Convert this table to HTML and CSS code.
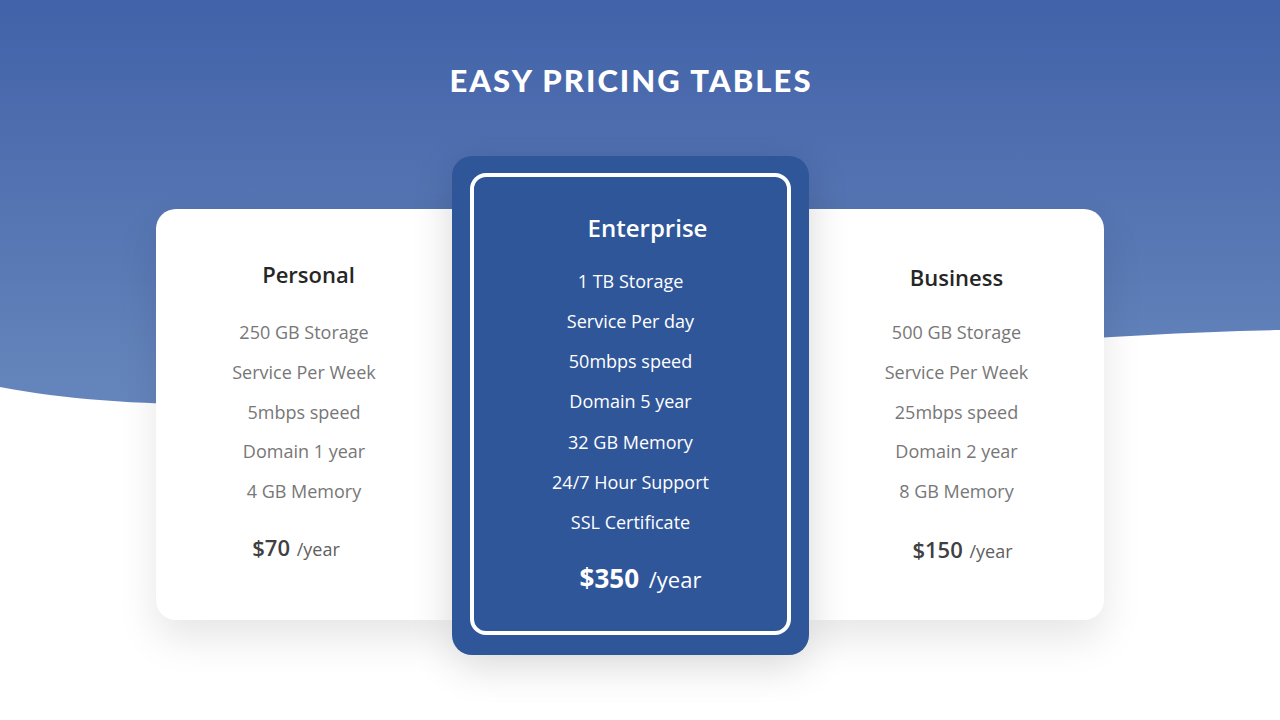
FILE: index.html
```html
<!DOCTYPE html>
<html>
<head>
<meta charset="utf-8">
<link rel="stylesheet" href="styles.css">
</head>
<body>
<div class="page">
  <h1 class="title">EASY PRICING TABLES</h1>
  <div class="plans">
    <div class="card card-side card-personal">
      <h2 class="plan-name">Personal</h2>
      <ul class="features">
        <li>250 GB Storage</li>
        <li>Service Per Week</li>
        <li>5mbps speed</li>
        <li>Domain 1 year</li>
        <li>4 GB Memory</li>
      </ul>
      <div class="price"><b>$70</b> /year</div>
    </div>
    <div class="card card-featured">
      <div class="featured-inner">
        <h2 class="plan-name featured-name">Enterprise</h2>
        <ul class="features featured-features">
          <li>1 TB Storage</li>
          <li>Service Per day</li>
          <li>50mbps speed</li>
          <li>Domain 5 year</li>
          <li>32 GB Memory</li>
          <li>24/7 Hour Support</li>
          <li>SSL Certificate</li>
        </ul>
        <div class="price featured-price"><b>$350</b> /year</div>
      </div>
    </div>
    <div class="card card-side card-business">
      <h2 class="plan-name">Business</h2>
      <ul class="features">
        <li>500 GB Storage</li>
        <li>Service Per Week</li>
        <li>25mbps speed</li>
        <li>Domain 2 year</li>
        <li>8 GB Memory</li>
      </ul>
      <div class="price"><b>$150</b> /year</div>
    </div>
  </div>
</div>
</body>
</html>
```
FILE: styles.css
```css
* { box-sizing: border-box; }
html, body { margin: 0; padding: 0; }
body {
  width: 1280px;
  height: 720px;
  overflow: hidden;
  background: #ffffff;
  font-family: "Open Sans", "Liberation Sans", sans-serif;
}
.page {
  position: relative;
  width: 1280px;
  height: 720px;
  padding-top: 60px;
}
.page::before {
  content: "";
  position: absolute;
  left: 0;
  top: 0;
  width: 1280px;
  height: 460px;
  background: linear-gradient(180deg, #4262a9 0%, #5272b1 40%, #6383bb 80%, #6787bd 100%);
  clip-path: path("M0 0 H1280 V330 C 800 340, 300 445, 0 387 Z");
  z-index: 0;
}
.title {
  position: relative;
  z-index: 1;
  margin: 0;
  height: 40px;
  line-height: 40px;
  text-align: center;
  padding-right: 18px;
  color: #ffffff;
  font-family: "Lato", "DejaVu Sans", sans-serif;
  font-weight: 900;
  font-size: 31px;
  letter-spacing: 2.05px;
}
.plans {
  position: relative;
  z-index: 1;
  display: flex;
  align-items: flex-start;
  margin-top: 56px;
  padding-left: 156px;
}
.card {
  border-radius: 20px;
}
.card-side {
  background: #ffffff;
  margin-top: 53px;
  height: 411px;
  display: flex;
  flex-direction: column;
  align-items: center;
  padding-top: 50px;
  box-shadow: 0 18px 40px rgba(0, 0, 0, 0.10);
}
.card-personal {
  width: 296px;
  border-radius: 20px 0 0 20px;
}
.card-business {
  width: 295px;
  border-radius: 0 20px 20px 0;
  padding-top: 53px;
}
.plan-name {
  margin: 0;
  font-size: 22px;
  line-height: 30px;
  font-weight: 600;
  color: #262626;
}
.card-personal .plan-name { padding-left: 9px; }
.features {
  list-style: none;
  margin: 24px 0 0;
  padding: 0;
  text-align: center;
}
.features li {
  font-size: 18px;
  line-height: 39.75px;
  color: #777777;
}
.card-business .features { margin-top: 21px; }
.price {
  margin-top: 20px;
  font-size: 18px;
  line-height: 30px;
  color: #606060;
}
.price b {
  font-size: 22px;
  font-weight: 600;
  color: #404040;
  margin-right: 2px;
}
.card-personal .price { padding-right: 16px; }
.card-business .price { margin-top: 22px; padding-left: 12px; }
.card-featured {
  position: relative;
  z-index: 2;
  width: 357px;
  height: 499px;
  background: #30569a;
  padding: 17px 18px 20px 18px;
  box-shadow: 0 10px 40px rgba(0, 0, 0, 0.16);
}
.featured-inner {
  height: 100%;
  border: 4px solid #ffffff;
  border-radius: 16px;
  display: flex;
  flex-direction: column;
  align-items: center;
  padding-top: 35px;
}
.featured-name {
  color: #ffffff;
  font-size: 24px;
  line-height: 32px;
  font-weight: 600;
  padding-left: 34px;
}
.featured-features {
  margin-top: 17px;
}
.featured-features li {
  color: #ffffff;
  line-height: 40.15px;
}
.featured-price {
  margin-top: 19px;
  color: #ffffff;
  font-size: 22px;
  line-height: 34px;
  padding-left: 20px;
}
.featured-price b {
  color: #ffffff;
  font-size: 26px;
  font-weight: 700;
  margin-right: 4px;
}
```
